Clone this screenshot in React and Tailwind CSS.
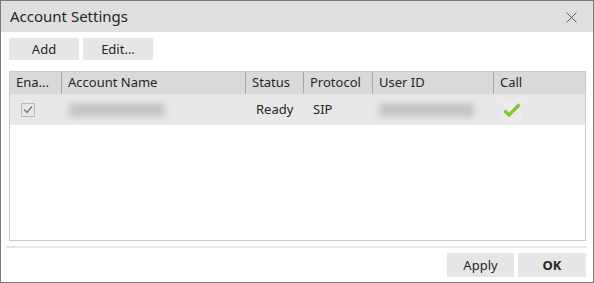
import React from 'react';

const font = { fontFamily: '"Noto Sans", "Open Sans", sans-serif' };

const columns = [
  { label: 'Ena...', w: 'w-[52px]' },
  { label: 'Account Name', w: 'w-[184px]' },
  { label: 'Status', w: 'w-[58px]' },
  { label: 'Protocol', w: 'w-[69px]' },
  { label: 'User ID', w: 'w-[121px]' },
  { label: 'Call', w: 'flex-1' },
];

const Blur = ({ w }) => (
  <div className={`${w} h-[14px] bg-[#c4c4c4] blur-[3px]`} />
);

export default function App() {
  return (
    <div
      className="w-[594px] h-[283px] border border-[#7a7a7a] bg-white flex flex-col text-[#262626] overflow-hidden"
      style={font}
    >
      {/* Title bar */}
      <div className="h-[31px] bg-[#dfdfdf] flex items-center justify-between pl-[9px] pr-[16px] shrink-0">
        <span className="text-[15px] leading-none">Account Settings</span>
        <svg width="11" height="11" viewBox="0 0 11 11" className="mt-[1px]">
          <path d="M0.5 0.5 L10.5 10.5 M10.5 0.5 L0.5 10.5" stroke="#5a5a5a" strokeWidth="1" fill="none" />
        </svg>
      </div>

      {/* Toolbar */}
      <div className="flex gap-[4px] pl-[8px] pt-[6px] shrink-0">
        <button className="w-[70px] h-[22px] bg-[#e6e6e6] text-[13px] leading-none">Add</button>
        <button className="w-[70px] h-[22px] bg-[#e6e6e6] text-[13px] leading-none">Edit...</button>
      </div>

      {/* Table */}
      <div className="ml-[8px] mt-[11px] w-[577px] h-[170px] border border-[#c9c9c9] flex flex-col shrink-0">
        <div className="flex h-[22px] bg-[#d9d9d9] text-[13px]">
          {columns.map((c, i) => (
            <div
              key={c.label}
              className={`${c.w} flex items-center pl-[6px] ${i < columns.length - 1 ? 'border-r border-[#a9a9a9]' : ''}`}
            >
              {c.label}
            </div>
          ))}
        </div>
        <div className="flex h-[31px] bg-[#e8e8e8] text-[13px]">
          <div className="w-[52px] flex items-center pl-[11px]">
            <div className="w-[14px] h-[14px] border border-[#b8b8b8] flex items-center justify-center">
              <svg width="10" height="9" viewBox="0 0 10 9">
                <path d="M1 4.5 L4 7.5 L9 1.5" stroke="#7e7e7e" strokeWidth="1.5" fill="none" />
              </svg>
            </div>
          </div>
          <div className="w-[184px] flex items-center pl-[7px]">
            <Blur w="w-[96px]" />
          </div>
          <div className="w-[58px] flex items-center pl-[10px]">Ready</div>
          <div className="w-[69px] flex items-center pl-[9px]">SIP</div>
          <div className="w-[121px] flex items-center pl-[6px]">
            <Blur w="w-[95px]" />
          </div>
          <div className="flex-1 flex items-center pl-[8px]">
            <div className="w-[20px] h-[24px] bg-[#ebebeb] flex items-center justify-center">
              <svg width="18" height="14" viewBox="0 0 18 14">
                <path d="M1.5 7.5 L6 12 L16.5 1.5" stroke="#7cc62e" strokeWidth="3.2" fill="none" />
              </svg>
            </div>
          </div>
        </div>
      </div>

      {/* Separator */}
      <div className="ml-[5px] mt-[5px] w-[581px] h-[2px] bg-[#e6e6e6] shrink-0" />

      {/* Footer buttons */}
      <div className="flex justify-end gap-[4px] pr-[7px] pt-[5px] shrink-0">
        <button className="w-[67px] h-[24px] bg-[#e6e6e6] text-[13px] leading-none">Apply</button>
        <button className="w-[68px] h-[24px] bg-[#e6e6e6] text-[13px] font-bold leading-none">OK</button>
      </div>
    </div>
  );
}
